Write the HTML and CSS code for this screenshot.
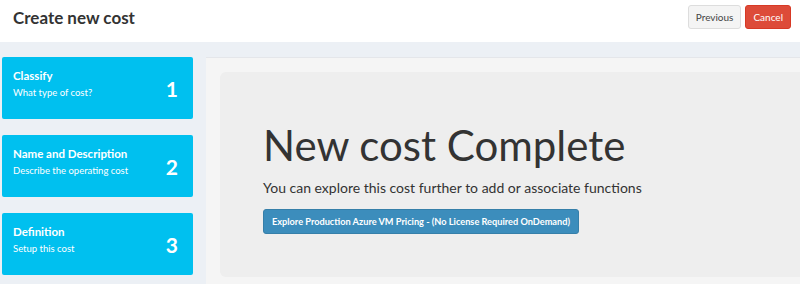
FILE: index.html
```html
<!DOCTYPE html>
<html lang="en">
<head>
    <meta charset="UTF-8">
    <meta name="viewport" content="width=device-width, initial-scale=1.0">
    <title>Create new cost</title>
    <link rel="stylesheet" href="styles.css">
</head>
<body>
    <div class="page-header">
        <h1>Create new cost</h1>
        <div class="header-actions">
            <button class="btn btn-default">Previous</button>
            <button class="btn btn-danger">Cancel</button>
        </div>
    </div>

    <div class="wizard">
        <div class="steps">
            <div class="step">
                <div class="step-text">
                    <div class="step-title">Classify</div>
                    <div class="step-desc">What type of cost?</div>
                </div>
                <div class="step-num">1</div>
            </div>
            <div class="step">
                <div class="step-text">
                    <div class="step-title">Name and Description</div>
                    <div class="step-desc">Describe the operating cost</div>
                </div>
                <div class="step-num">2</div>
            </div>
            <div class="step">
                <div class="step-text">
                    <div class="step-title">Definition</div>
                    <div class="step-desc">Setup this cost</div>
                </div>
                <div class="step-num">3</div>
            </div>
        </div>

        <div class="panel">
            <div class="jumbotron">
                <h2>New cost Complete</h2>
                <p>You can explore this cost further to add or associate functions</p>
                <button class="btn btn-primary">Explore Production Azure VM Pricing - (No License Required OnDemand)</button>
            </div>
        </div>
    </div>
</body>
</html>
```

FILE: styles.css
```css
body {
    margin: 0;
    font-family: Lato, "Open Sans", sans-serif;
    background-color: #ecf0f5;
    color: #333;
    height: 284px;
    overflow: hidden;
}
.page-header {
    display: flex;
    justify-content: space-between;
    align-items: flex-start;
    height: 42px;
    padding: 5px 9px 0 13px;
    box-sizing: border-box;
    background: white;
}
.page-header h1 {
    margin: 1px 0 0;
    font-size: 17px;
    line-height: 24px;
    font-weight: bold;
    color: #333;
}
.header-actions {
    display: flex;
    gap: 4px;
}
.btn {
    font-family: inherit;
    border-radius: 3px;
    border: 1px solid transparent;
    cursor: pointer;
}
.btn-default {
    background: #f4f4f4;
    border-color: #ddd;
    color: #444;
    font-size: 10px;
    height: 24px;
    padding: 0 7px;
}
.btn-danger {
    background: #dd4b39;
    border-color: #d73925;
    color: white;
    font-size: 10px;
    height: 24px;
    padding: 0 7px;
}
.btn-primary {
    background: #3c8dbc;
    border-color: #367fa9;
    color: white;
    font-size: 9.2px;
    font-weight: bold;
    height: 25px;
    padding: 0 8px;
}
.wizard {
    display: flex;
    padding: 15px 0 0 2px;
}
.steps {
    width: 191px;
    flex-shrink: 0;
}
.step {
    display: flex;
    justify-content: space-between;
    align-items: center;
    height: 62px;
    margin-bottom: 16px;
    padding: 0 15px 0 11px;
    box-sizing: border-box;
    background: #00c0ef;
    border-radius: 2px;
    color: white;
}
.step:last-child {
    margin-bottom: 0;
}
.step-text {
    align-self: flex-start;
    padding-top: 11px;
}
.step-title {
    font-size: 11.5px;
    font-weight: bold;
    line-height: 16px;
}
.step-desc {
    font-size: 9.5px;
    line-height: 18px;
}
.step-num {
    font-size: 21px;
    font-weight: bold;
}
.panel {
    flex: 1;
    margin-left: 13px;
    padding: 14px 0 0 14px;
    background: #f5f5f5;
    border-top: 1px solid #e4e6ea;
    height: 226px;
}
.jumbotron {
    height: 205px;
    padding: 48px 0 0 43px;
    box-sizing: border-box;
    background: #eee;
    border-radius: 6px 0 0 6px;
}
.jumbotron h2 {
    margin: 0;
    font-size: 42px;
    font-weight: normal;
    line-height: 50px;
}
.jumbotron p {
    margin: 8px 0 11px;
    font-size: 14px;
    line-height: 20px;
}
```
